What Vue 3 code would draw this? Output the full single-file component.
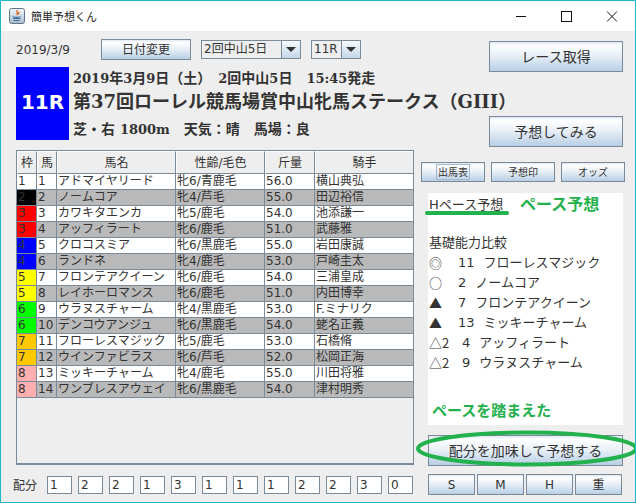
<script setup>
const frameColors = { 1: '#ffffff', 2: '#000000', 3: '#ff0000', 4: '#0000ff', 5: '#ffff00', 6: '#00ff00', 7: '#ffc800', 8: '#ffafaf' }
const horses = [
  [1, 1, 'アドマイヤリード', '牝6/青鹿毛', '56.0', '横山典弘'],
  [2, 2, 'ノームコア', '牝4/芦毛', '55.0', '田辺裕信'],
  [3, 3, 'カワキタエンカ', '牝5/鹿毛', '54.0', '池添謙一'],
  [3, 4, 'アッフィラート', '牝6/鹿毛', '51.0', '武藤雅'],
  [4, 5, 'クロコスミア', '牝6/黒鹿毛', '55.0', '岩田康誠'],
  [4, 6, 'ランドネ', '牝4/鹿毛', '53.0', '戸崎圭太'],
  [5, 7, 'フロンテアクイーン', '牝6/鹿毛', '54.0', '三浦皇成'],
  [5, 8, 'レイホーロマンス', '牝6/鹿毛', '51.0', '内田博幸'],
  [6, 9, 'ウラヌスチャーム', '牝4/黒鹿毛', '53.0', 'F.ミナリク'],
  [6, 10, 'デンコウアンジュ', '牝6/黒鹿毛', '54.0', '蛯名正義'],
  [7, 11, 'フローレスマジック', '牝5/鹿毛', '53.0', '石橋脩'],
  [7, 12, 'ウインファビラス', '牝6/芦毛', '52.0', '松岡正海'],
  [8, 13, 'ミッキーチャーム', '牝4/鹿毛', '55.0', '川田将雅'],
  [8, 14, 'ワンブレスアウェイ', '牝6/黒鹿毛', '54.0', '津村明秀'],
]
const headers = ['枠', '馬', '馬名', '性齢/毛色', '斤量', '騎手']
const picks = [
  { mark: '◎', num: '11', name: 'フローレスマジック' },
  { mark: '○', num: '2', name: 'ノームコア' },
  { mark: '▲', num: '7', name: 'フロンテアクイーン' },
  { mark: '▲', num: '13', name: 'ミッキーチャーム' },
  { mark: '△2', num: '4', name: 'アッフィラート', wide: true },
  { mark: '△2', num: '9', name: 'ウラヌスチャーム', wide: true },
]
const allocation = [1, 2, 2, 1, 3, 1, 1, 1, 2, 2, 3, 0]
</script>

<template>
  <div class="window">
    <div class="titlebar">
      <svg class="appicon" viewBox="0 0 16 16" width="16" height="16">
        <defs>
          <linearGradient id="ic" x1="0" y1="0" x2="0" y2="1">
            <stop offset="0" stop-color="#f4f7fa" />
            <stop offset="1" stop-color="#a9bccd" />
          </linearGradient>
        </defs>
        <rect x="0.5" y="0.5" width="15" height="15" rx="2" fill="url(#ic)" stroke="#5f7488" />
        <path d="M8.5 2c-2.5 2 1.5 2.5-.8 5M10.5 4c-1.5 1-.5 1.5-1.3 2.5" fill="none" stroke="#e0661a" stroke-width="1.3" />
        <path d="M3.5 8.5c1 1.2 7 1.2 8 0M4 10.5h7.5M4.5 12.5h6" fill="none" stroke="#3a6a9a" stroke-width="1.1" />
      </svg>
      <span class="apptitle">簡単予想くん</span>
      <div class="wincontrols">
        <svg width="103" height="30" viewBox="0 0 103 30">
          <path d="M1 15.5h10" stroke="#111" fill="none" />
          <rect x="46.5" y="10.5" width="10" height="10" stroke="#111" fill="none" />
          <path d="M92 10.5l10 10M102 10.5l-10 10" stroke="#111" fill="none" />
        </svg>
      </div>
    </div>

    <div class="content">
      <div class="header">
        <div class="header-left">
          <div class="toolbar">
            <span class="date">2019/3/9</span>
            <button class="btn btn-date">日付変更</button>
            <div class="combo combo-place">
              <span class="combo-text">2回中山5日</span>
              <span class="combo-arrow"><i></i></span>
            </div>
            <div class="combo combo-race">
              <span class="combo-text">11R</span>
              <span class="combo-arrow"><i></i></span>
            </div>
          </div>
          <div class="race">
            <div class="badge">11R</div>
            <div class="race-info">
              <div class="race-line"><span class="lat">2019</span>年<span class="lat">3</span>月<span class="lat">9</span>日（土）　<span class="lat">2</span>回中山<span class="lat">5</span>日　<span class="lat">15:45</span>発走</div>
              <div class="race-title">第37回ローレル競馬場賞中山牝馬ステークス（GIII）</div>
              <div class="race-line race-cond">芝・右 <span class="lat">1800m</span>　天気：晴　馬場：良</div>
            </div>
          </div>
        </div>
        <div class="header-right">
          <button class="btn btn-big">レース取得</button>
          <button class="btn btn-big">予想してみる</button>
        </div>
      </div>

      <div class="main">
        <div class="table">
          <div class="row head">
            <div v-for="h in headers" :key="h" class="cell">{{ h }}</div>
          </div>
          <div v-for="(r, i) in horses" :key="r[1]" class="row" :class="{ odd: i % 2 === 1 }">
            <div class="cell frame" :style="{ background: frameColors[r[0]] }">{{ r[0] }}</div>
            <div class="cell">{{ r[1] }}</div>
            <div class="cell">{{ r[2] }}</div>
            <div class="cell">{{ r[3] }}</div>
            <div class="cell">{{ r[4] }}</div>
            <div class="cell">{{ r[5] }}</div>
          </div>
        </div>

        <div class="side">
          <div class="tabs">
            <button class="btn btn-tab focus"><span>出馬表</span></button>
            <button class="btn btn-tab"><span>予想印</span></button>
            <button class="btn btn-tab"><span>オッズ</span></button>
          </div>
          <div class="panel">
            <div class="panel-head">
              <span class="pace-label">Hペース予想</span>
              <span class="green-big">ペース予想</span>
              <i class="underline"></i>
            </div>
            <div class="basis">基礎能力比較</div>
            <div v-for="p in picks" :key="p.num" class="pick">
              <span class="mark" :class="{ wide: p.wide }">{{ p.mark }}</span>
              <span class="num">{{ p.num }}</span>
              <span>{{ p.name }}</span>
            </div>
            <div class="green-note">ペースを踏まえた</div>
          </div>
          <button class="btn btn-haibun">配分を加味して予想する</button>
        </div>
      </div>

      <div class="bottom">
        <span class="alloc-label">配分</span>
        <div class="allocs">
          <div v-for="(a, i) in allocation" :key="i" class="alloc">{{ a }}</div>
        </div>
        <div class="paces">
          <button class="btn btn-pace">S</button>
          <button class="btn btn-pace">M</button>
          <button class="btn btn-pace">H</button>
          <button class="btn btn-pace">重</button>
        </div>
      </div>
    </div>

    <svg class="ellipse" width="222" height="40" viewBox="0 0 222 40">
      <ellipse cx="111" cy="19.5" rx="109" ry="16" fill="none" stroke="#22b14c" stroke-width="4" />
    </svg>
  </div>
</template>

<style scoped>
.window {
  position: relative;
  box-sizing: border-box;
  width: 636px;
  height: 503px;
  border: 1px solid #18b9c9;
  background: #eeeeee;
  overflow: hidden;
  color: #333333;
  font-family: "DejaVu Sans", "Noto Sans CJK JP", sans-serif;
  font-size: 12px;
}
.titlebar {
  display: flex;
  align-items: center;
  height: 30px;
  background: #ffffff;
  padding-left: 8px;
}
.appicon { flex: none; margin-right: 6px; }
.apptitle {
  font-family: "Noto Sans CJK JP", sans-serif;
  font-size: 11px;
  color: #222;
}
.wincontrols {
  margin-left: auto;
  margin-right: 17px;
  height: 30px;
}
.wincontrols svg { display: block; }
.content {
  padding-left: 15px;
}
.header {
  display: flex;
  height: 119px;
}
.header-left { flex: none; width: 473px; padding-top: 8px; }
.toolbar {
  display: flex;
  align-items: center;
  height: 21px;
}
.date { width: 85px; flex: none; }
.btn {
  box-sizing: border-box;
  display: block;
  margin: 0;
  padding: 0;
  border: 1px solid #7a8a99;
  border-width: 1px;
  background: linear-gradient(#dde8f3 0, #ffffff 12%, #e6eef6 50%, #b8cfe5 100%);
  color: #333333;
  font-family: "DejaVu Sans", "Noto Sans CJK JP", sans-serif;
  font-size: 12px;
  line-height: 1;
}
.btn-date { width: 90px; height: 21px; margin-right: 10px; }
.combo {
  box-sizing: border-box;
  display: flex;
  height: 19px;
  border: 1px solid #7a8a99;
  background: #ffffff;
  flex: none;
}
.combo-place { width: 100px; margin-right: 10px; }
.combo-race { width: 50px; }
.combo-text {
  flex: 1;
  background: #eeeeee;
  line-height: 17px;
  padding-left: 2px;
}
.combo-arrow {
  flex: none;
  width: 18px;
  display: flex;
  align-items: center;
  justify-content: center;
  border-left: 1px solid #7a8a99;
  background: linear-gradient(#f6f9fc, #c4d6e8);
}
.combo-arrow i {
  width: 0;
  height: 0;
  border-left: 5px solid transparent;
  border-right: 5px solid transparent;
  border-top: 5px solid #333333;
}
.race {
  display: flex;
  margin-top: 7px;
}
.badge {
  flex: none;
  width: 53px;
  height: 73px;
  background: #0000ff;
  color: #ffffff;
  font-family: "DejaVu Sans", sans-serif;
  font-weight: bold;
  font-size: 20px;
  line-height: 71px;
  text-align: center;
}
.race-info { margin-left: 4px; white-space: nowrap; }
.race-line {
  font-family: "DejaVu Serif", "Noto Sans CJK JP", serif;
  font-weight: bold;
  font-size: 14px;
  line-height: 22px;
}
.lat { font-size: 13px; }
.race-title {
  font-family: "DejaVu Serif", "Noto Sans CJK JP", serif;
  font-weight: bold;
  font-size: 18px;
  line-height: 24px;
}
.race-cond { margin-top: 4px; }
.header-right {
  flex: none;
  width: 134px;
  padding-top: 10px;
}
.btn-big {
  width: 134px;
  height: 31px;
  font-size: 14px;
  margin-bottom: 44px;
}
.main {
  display: flex;
  height: 316px;
}
.table {
  box-sizing: border-box;
  flex: none;
  width: 398px;
  height: 315px;
  border: 1px solid #7a8a99;
  border-width: 1px 1px 2px 1px;
}
.row {
  display: grid;
  grid-template-columns: 20px 20px 119px 89px 50px 98px;
  height: 16px;
  background: #ffffff;
  box-sizing: border-box;
}
.row.odd { background: #b9b9b9; }
.cell {
  box-sizing: border-box;
  border-right: 1px solid #7a8a99;
  border-bottom: 1px solid #7a8a99;
  padding-left: 1px;
  line-height: 15px;
  white-space: nowrap;
  overflow: hidden;
}
.cell:last-child { border-right: none; }
.head {
  height: 23px;
  background: #eeeeee;
}
.head .cell {
  text-align: center;
  line-height: 22px;
  padding-left: 0;
  border-left: 1px solid #ffffff;
  border-top: 1px solid #ffffff;
}
.side {
  flex: none;
  width: 204px;
  margin-left: 7px;
  padding-top: 12px;
}
.tabs {
  display: flex;
  justify-content: space-between;
  height: 20px;
}
.btn-tab {
  width: 64px;
  height: 20px;
  font-size: 10px;
  font-family: "Noto Sans CJK JP", sans-serif;
}
.focus span {
  display: inline-block;
  border: 1px solid #a3b8cc;
  padding: 2px 0;
  width: 32px;
}
.panel {
  position: relative;
  box-sizing: border-box;
  width: 195px;
  height: 232px;
  margin: 11px 0 0 7px;
  background: #ffffff;
  padding: 0 0 0 1px;
  font-size: 13px;
}
.panel-head {
  position: relative;
  display: flex;
  align-items: center;
  height: 20px;
}
.pace-label { width: 91px; flex: none; }
.green-big {
  color: #22b14c;
  font-size: 16px;
  font-weight: bold;
  font-family: "Noto Sans CJK JP", sans-serif;
}
.underline {
  position: absolute;
  left: -4px;
  top: 18px;
  width: 84px;
  height: 4px;
  border-radius: 2px;
  background: #22b14c;
}
.basis { margin-top: 20px; line-height: 20px; }
.pick {
  display: flex;
  line-height: 20px;
  white-space: nowrap;
}
.mark {
  flex: none;
  width: 29px;
  font-family: "Noto Sans CJK JP", sans-serif;
}
.mark.wide { width: 33px; }
.num { margin-right: 9px; }
.green-note {
  margin: 27px 0 0 3px;
  color: #22b14c;
  font-size: 15px;
  font-weight: bold;
  line-height: 20px;
  font-family: "Noto Sans CJK JP", sans-serif;
}
.btn-haibun {
  width: 195px;
  height: 31px;
  margin: 10px 0 0 7px;
  font-size: 14px;
}
.bottom {
  display: flex;
  align-items: center;
  height: 21px;
  margin-top: 8px;
  margin-left: -3px;
}
.alloc-label { flex: none; width: 34px; }
.allocs { display: flex; gap: 6px; }
.alloc {
  box-sizing: border-box;
  width: 25px;
  height: 18px;
  border: 1px solid #7a8a99;
  background: #ffffff;
  line-height: 17px;
  padding-left: 2px;
}
.paces {
  display: flex;
  gap: 2px;
  margin-left: 15px;
}
.btn-pace { width: 47px; height: 21px; font-size: 12px; }
.ellipse {
  position: absolute;
  left: 415px;
  top: 428px;
  pointer-events: none;
}
</style>

<style>
html, body { margin: 0; padding: 0; }
</style>
